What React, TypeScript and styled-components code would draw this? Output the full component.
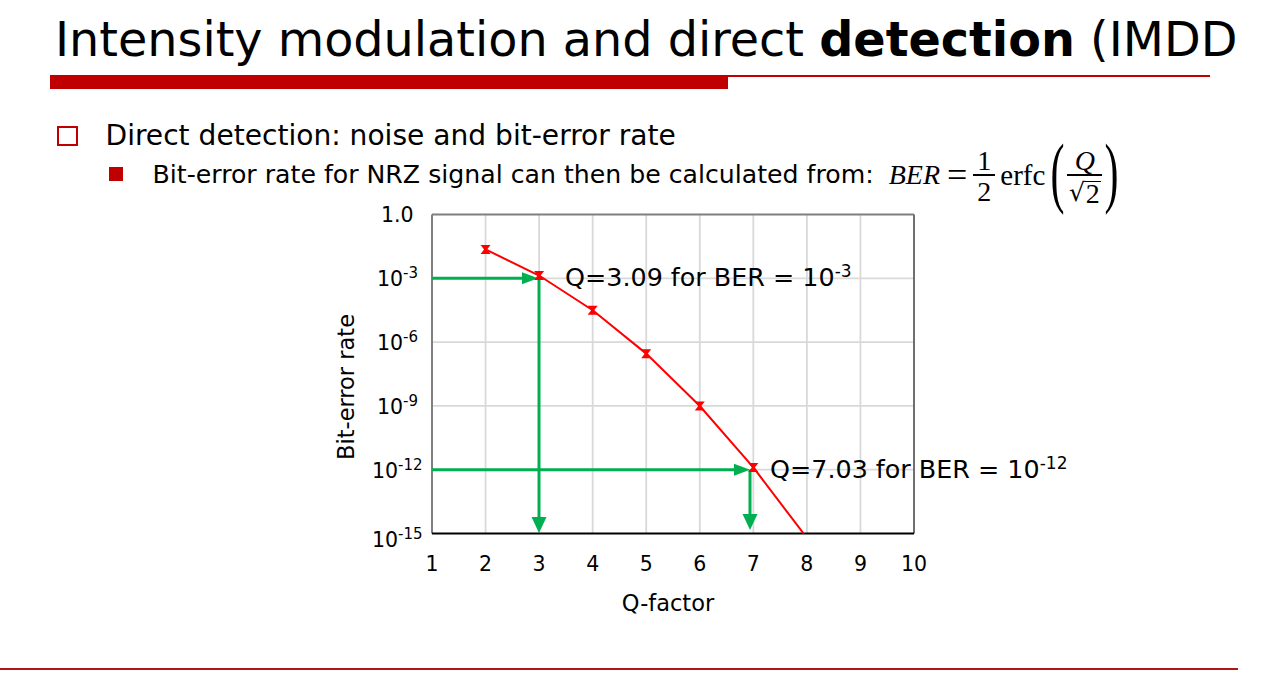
import React from "react";
import styled, { createGlobalStyle } from "styled-components";

const Global = createGlobalStyle`
  html, body { margin: 0; padding: 0; background: #ffffff; }
  #root { width: 1287px; height: 691px; overflow: hidden; }
`;

const RED = "#c00000";
const SANS = `"DejaVu Sans", Verdana, sans-serif`;
const SERIF = `"Liberation Serif", "Times New Roman", serif`;

const Slide = styled.div`
  width: 1287px;
  height: 691px;
  display: flex;
  flex-direction: column;
  font-family: ${SANS};
  color: #000;
  box-sizing: border-box;
`;

const Title = styled.h1`
  margin: 0;
  padding: 16px 0 0 55px;
  font-size: 47.7px;
  line-height: 48px;
  font-weight: normal;
  white-space: nowrap;
`;

const Bold = styled.b`
  font-weight: bold;
`;

const RuleRow = styled.div`
  display: flex;
  margin: 11px 0 0 50px;
  width: 1160px;
  height: 14px;
`;

const ThickBar = styled.div`
  width: 678px;
  height: 14px;
  background: ${RED};
`;

const ThinLine = styled.div`
  flex: 1;
  height: 2px;
  background: ${RED};
`;

const Level1 = styled.div`
  display: flex;
  align-items: center;
  gap: 28px;
  margin: 31px 0 0 57px;
  height: 32px;
  font-size: 28.1px;
  line-height: 32px;
  white-space: nowrap;
`;

const Level2 = styled.div`
  display: flex;
  align-items: center;
  gap: 30px;
  margin: 9px 0 0 109px;
  height: 28px;
  font-size: 25.2px;
  line-height: 28px;
  white-space: nowrap;
`;

const Square = styled.span<{ $filled?: boolean }>`
  flex: none;
  box-sizing: border-box;
  width: ${(p) => (p.$filled ? "13.5px" : "20.5px")};
  height: ${(p) => (p.$filled ? "13.5px" : "20.5px")};
  border: ${(p) => (p.$filled ? "none" : `2.3px solid ${RED}`)};
  background: ${(p) => (p.$filled ? RED : "transparent")};
  margin-top: ${(p) => (p.$filled ? "-2px" : "0")};
`;

const BulletText = styled.span``;

const Formula = styled.span`
  display: inline-flex;
  align-items: center;
  height: 68px;
  margin-left: -15px;
  font-family: ${SERIF};
  font-size: 28px;
  line-height: 28px;
  color: #000;
`;

const MathVar = styled.span`
  font-style: italic;
`;

const Op = styled.span`
  font-size: 36px;
  margin: 0 6px 0 7px;
`;

const Frac = styled.span<{ $w: number }>`
  display: inline-flex;
  flex-direction: column;
  align-items: center;
  width: ${(p) => p.$w}px;
`;

const Num = styled.span`
  line-height: 26px;
  height: 26px;
`;

const Den = styled.span`
  line-height: 26px;
  height: 26px;
  padding-top: 3px;
  margin-bottom: -3px;
`;

const FracBar = styled.span`
  align-self: stretch;
  height: 1.5px;
  background: #000;
`;

const Func = styled.span`
  margin: 0 5px 0 5px;
  font-size: 29px;
`;

const Paren = styled.span<{ $side: "l" | "r" }>`
  display: inline-block;
  font-size: 42px;
  line-height: 40px;
  transform: scaleY(1.85);
  margin: -6px ${(p) => (p.$side === "l" ? "3px" : "0")} 0 ${(p) => (p.$side === "r" ? "2px" : "0")};
`;

const Radical = styled.span`
  display: inline-flex;
  align-items: flex-end;
`;

const RadSign = styled.span`
  font-family: "DejaVu Serif", ${SERIF};
  font-size: 25px;
  line-height: 26px;
`;

const Radicand = styled.span`
  border-top: 1.5px solid #000;
  line-height: 24px;
  padding: 0 1px;
`;

const ChartBox = styled.div`
  margin: 5.6px 0 0 320px;
  width: 780px;
  height: 430px;
`;

const Footer = styled.div`
  margin-top: auto;
  margin-bottom: 21px;
  width: 1238px;
  height: 2px;
  background: #b01818;
`;

const PL = 432;
const PR = 914;
const PT = 214.5;
const PB = 533.5;
const XS = (PR - PL) / 9;
const DEC = (PB - PT) / 15;

const xOf = (q: number) => PL + (q - 1) * XS;
const yOfExp = (e: number) => PT + -e * DEC;

function erfc(x: number): number {
  const z = Math.abs(x);
  const t = 1 / (1 + 0.5 * z);
  const r =
    t *
    Math.exp(
      -z * z -
        1.26551223 +
        t *
          (1.00002368 +
            t *
              (0.37409196 +
                t *
                  (0.09678418 +
                    t *
                      (-0.18628806 +
                        t *
                          (0.27886807 +
                            t *
                              (-1.13520398 +
                                t * (1.48851587 + t * (-0.82215223 + t * 0.17087277))))))))
    );
  return x >= 0 ? r : 2 - r;
}

const ber = (q: number) => 0.5 * erfc(q / Math.SQRT2);
const points = [2, 3, 4, 5, 6, 7, 8].map((q) => ({
  q,
  x: xOf(q),
  y: yOfExp(Math.log10(ber(q))),
}));

const GREEN = "#00b050";
const LINE_RED = "#ff0000";

const yLabels: { main: string; sup?: string; x: number; y: number }[] = [
  { main: "1.0", x: 381, y: 222 },
  { main: "10", sup: "-3", x: 377, y: 285.5 },
  { main: "10", sup: "-6", x: 377, y: 349.5 },
  { main: "10", sup: "-9", x: 377, y: 413.5 },
  { main: "10", sup: "-12", x: 372, y: 477.5 },
  { main: "10", sup: "-15", x: 372, y: 546.5 },
];

function Marker({ x, y }: { x: number; y: number }) {
  return (
    <polygon
      points={`${x - 5},${y - 4.5} ${x + 5},${y - 4.5} ${x + 1.5},${y} ${x + 5},${y + 4.5} ${x - 5},${y + 4.5} ${x - 1.5},${y}`}
      fill={LINE_RED}
    />
  );
}

function Chart() {
  const grid: React.ReactNode[] = [];
  for (let q = 2; q <= 9; q++) {
    grid.push(
      <line key={"v" + q} x1={xOf(q)} x2={xOf(q)} y1={PT} y2={PB} stroke="#d9d9d9" strokeWidth={1.8} />
    );
  }
  for (let e = -3; e >= -12; e -= 3) {
    grid.push(
      <line key={"h" + e} x1={PL} x2={PR} y1={yOfExp(e)} y2={yOfExp(e)} stroke="#d9d9d9" strokeWidth={1.8} />
    );
  }
  const pathD = points.map((p, i) => `${i ? "L" : "M"}${p.x.toFixed(1)},${p.y.toFixed(1)}`).join(" ");
  const y3 = yOfExp(-3);
  const y12 = yOfExp(-12);
  return (
    <svg width={780} height={430} viewBox="320 195 780 430" fontFamily={SANS}>
      <defs>
        <clipPath id="plotClip">
          <rect x={PL} y={PT} width={PR - PL} height={PB - PT} />
        </clipPath>
      </defs>
      {grid}
      <line x1={PL} x2={PR} y1={PT} y2={PT} stroke="#7f7f7f" strokeWidth={2} />
      <line x1={PR} x2={PR} y1={PT} y2={PB} stroke="#6f6f6f" strokeWidth={2} />
      <line x1={PL} x2={PL} y1={PT} y2={PB} stroke="#7f7f7f" strokeWidth={2} />
      <line x1={PL} x2={PR} y1={PB} y2={PB} stroke="#000" strokeWidth={2} />

      <line x1={PL} x2={524} y1={y3} y2={y3} stroke={GREEN} strokeWidth={3} />
      <polygon points={`522,${y3 - 6} 538,${y3} 522,${y3 + 6}`} fill={GREEN} />
      <line x1={539} x2={539} y1={y3} y2={519} stroke={GREEN} strokeWidth={3} />
      <polygon points={`531.5,517 539,533 546.5,517`} fill={GREEN} />

      <line x1={PL} x2={736} y1={y12} y2={y12} stroke={GREEN} strokeWidth={3} />
      <polygon points={`734,${y12 - 6} 750,${y12} 734,${y12 + 6}`} fill={GREEN} />
      <line x1={750} x2={750} y1={y12} y2={516} stroke={GREEN} strokeWidth={3} />
      <polygon points={`742.5,514 750,530 757.5,514`} fill={GREEN} />

      <g clipPath="url(#plotClip)">
        <path d={pathD} fill="none" stroke={LINE_RED} strokeWidth={2} />
      </g>
      {points
        .filter((p) => p.q <= 7)
        .map((p) => (
          <Marker key={p.q} x={p.x} y={p.y} />
        ))}

      {yLabels.map((l) => (
        <text key={l.main + (l.sup || "")} x={l.x} y={l.y} fontSize={20.5} fill="#000">
          {l.main}
          {l.sup && (
            <tspan fontSize={15} dy={-7.5}>
              {l.sup}
            </tspan>
          )}
        </text>
      ))}

      {[1, 2, 3, 4, 5, 6, 7, 8, 9, 10].map((q) => (
        <text key={q} x={xOf(q)} y={571} fontSize={20.5} textAnchor="middle" fill="#000">
          {q}
        </text>
      ))}

      <text x={668} y={611} fontSize={22.5} textAnchor="middle" fill="#000">
        Q-factor
      </text>
      <text
        x={0}
        y={0}
        fontSize={22.5}
        textAnchor="middle"
        fill="#000"
        transform="translate(354 387) rotate(-90)"
      >
        Bit-error rate
      </text>

      <text x={565} y={286} fontSize={25.4} fill="#000">
        Q=3.09 for BER = 10
        <tspan fontSize={17} dy={-9}>
          -3
        </tspan>
      </text>
      <text x={770} y={477.5} fontSize={25.4} fill="#000">
        Q=7.03 for BER = 10
        <tspan fontSize={17} dy={-9}>
          -12
        </tspan>
      </text>
    </svg>
  );
}

export default function App() {
  return (
    <>
      <Global />
      <Slide>
        <Title>
          Intensity modulation and direct <Bold>detection</Bold> (IMDD
        </Title>
        <RuleRow>
          <ThickBar />
          <ThinLine />
        </RuleRow>
        <Level1>
          <Square />
          <BulletText>Direct detection: noise and bit-error rate</BulletText>
        </Level1>
        <Level2>
          <Square $filled />
          <BulletText>Bit-error rate for NRZ signal can then be calculated from:</BulletText>
          <Formula>
            <MathVar>BER</MathVar>
            <Op>=</Op>
            <Frac $w={22}>
              <Num>1</Num>
              <FracBar />
              <Den>2</Den>
            </Frac>
            <Func>erfc</Func>
            <Paren $side="l">(</Paren>
            <Frac $w={35}>
              <Num>
                <MathVar>Q</MathVar>
              </Num>
              <FracBar />
              <Den>
                <Radical>
                  <RadSign>√</RadSign>
                  <Radicand>2</Radicand>
                </Radical>
              </Den>
            </Frac>
            <Paren $side="r">)</Paren>
          </Formula>
        </Level2>
        <ChartBox>
          <Chart />
        </ChartBox>
        <Footer />
      </Slide>
    </>
  );
}
